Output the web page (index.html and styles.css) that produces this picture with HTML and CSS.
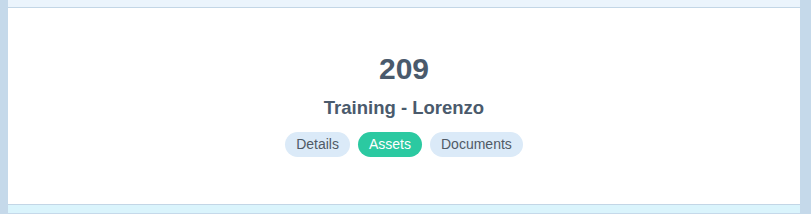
FILE: index.html
```html
<!DOCTYPE html>
<html>
<head>
<meta charset="utf-8">
<link rel="stylesheet" href="styles.css">
</head>
<body>
<div class="frame">
  <div class="top-band"></div>
  <main class="card">
    <div class="number">209</div>
    <div class="title">Training - Lorenzo</div>
    <nav class="tabs">
      <span class="pill">Details</span>
      <span class="pill active">Assets</span>
      <span class="pill">Documents</span>
    </nav>
  </main>
  <div class="bottom-band"></div>
</div>
</body>
</html>
```
FILE: styles.css
```css
html, body {
  margin: 0;
  padding: 0;
}
body {
  background: #c5d9ea;
  padding: 0 11px 0 8px;
  font-family: "Liberation Sans", Arial, sans-serif;
  height: 214px;
  overflow: hidden;
}
.frame {
  display: flex;
  flex-direction: column;
}
.top-band {
  height: 7px;
  background: #ebf4fc;
  border-bottom: 1px solid #c3d6e6;
}
.card {
  background: #ffffff;
  height: 197px;
  box-sizing: border-box;
  padding-top: 44px;
  display: flex;
  flex-direction: column;
  align-items: center;
  border-bottom: 1px solid #c3d6e6;
}
.number {
  font-size: 30px;
  line-height: 34px;
  font-weight: bold;
  color: #4a5a6c;
}
.title {
  margin-top: 11px;
  font-size: 18.5px;
  line-height: 22px;
  font-weight: bold;
  color: #4a5a6c;
}
.tabs {
  margin-top: 13px;
  display: flex;
  gap: 8px;
}
.pill {
  height: 25px;
  line-height: 25px;
  padding: 0 11px;
  border-radius: 13px;
  background: #dbeaf8;
  color: #505a66;
  font-size: 14px;
}
.pill.active {
  background: #2bc9a1;
  color: #ffffff;
}
.bottom-band {
  height: 8px;
  background: #daf4fc;
}
```
